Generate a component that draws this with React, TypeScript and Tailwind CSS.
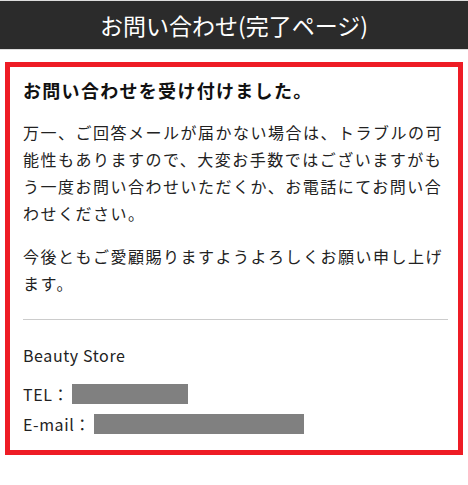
export default function App() {
  return (
    <div className="min-h-screen bg-white font-['Noto_Sans_CJK_JP','Noto_Sans',sans-serif] text-[#222]">
      {/* Header */}
      <div className="flex h-[50px] items-center justify-center border-y border-[#ddd] bg-[#2b2b2b]">
        <h1 className="text-[23px] leading-none text-white">お問い合わせ(完了ページ)</h1>
      </div>

      {/* Box */}
      <div className="mx-[5px] mt-[12px] border-[5px] border-[#ee1c25] pt-[10px] pr-[10px] pb-[11px] pl-[13px]">
        <h2 className="text-[18px] font-bold leading-[27px] tracking-[1.3px] text-[#111]">
          お問い合わせを受け付けました。
        </h2>
        <p className="mt-[15px] text-[16px] leading-[27px] tracking-[1.5px]">
          万一、ご回答メールが届かない場合は、トラブルの可能性もありますので、大変お手数ではございますがもう一度お問い合わせいただくか、お電話にてお問い合わせください。
        </p>
        <p className="mt-[16px] text-[16px] leading-[27px] tracking-[1.5px]">
          今後ともご愛顧賜りますようよろしくお願い申し上げます。
        </p>

        <div className="mt-[22px] border-t border-[#ccc]" />

        <div className="mt-[22px] text-[16px] tracking-[0.6px]">
          <p className="leading-[27px]">Beauty Store</p>
          <p className="mt-[10px] flex items-center leading-[30px]">
            TEL：<span className="ml-[3px] inline-block h-[20px] w-[116px] bg-[#808080]" />
          </p>
          <p className="flex items-center leading-[30px]">
            E-mail：<span className="ml-[3px] inline-block h-[20px] w-[210px] bg-[#808080]" />
          </p>
        </div>
      </div>
    </div>
  );
}
